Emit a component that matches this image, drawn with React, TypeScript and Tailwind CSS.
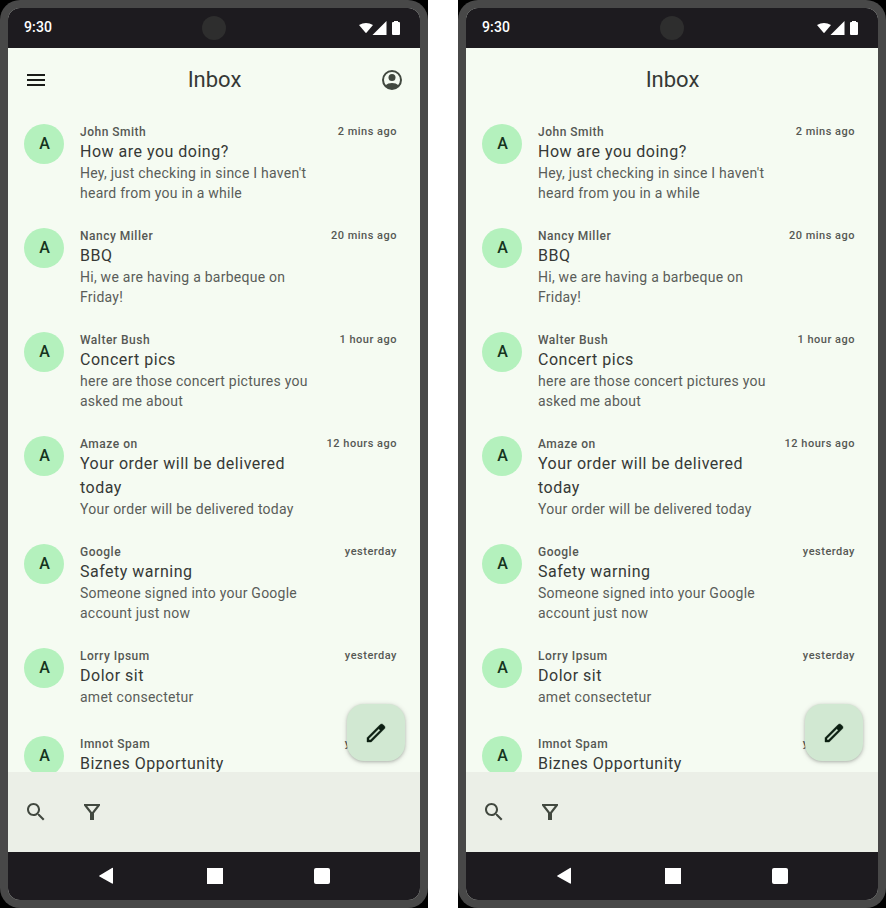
type Mail = { from: string; title: string; text?: string; time: string };

const mails: Mail[] = [
  { from: "John Smith", title: "How are you doing?", text: "Hey, just checking in since I haven't heard from you in a while", time: "2 mins ago" },
  { from: "Nancy Miller", title: "BBQ", text: "Hi, we are having a barbeque on Friday!", time: "20 mins ago" },
  { from: "Walter Bush", title: "Concert pics", text: "here are those concert pictures you asked me about", time: "1 hour ago" },
  { from: "Amaze on", title: "Your order will be delivered today", text: "Your order will be delivered today", time: "12 hours ago" },
  { from: "Google", title: "Safety warning", text: "Someone signed into your Google account just now", time: "yesterday" },
  { from: "Lorry Ipsum", title: "Dolor sit", text: "amet consectetur", time: "yesterday" },
  { from: "Imnot Spam", title: "Biznes Opportunity", time: "yesterday" },
];

function Icon({ d, className = "" }: { d: string; className?: string }) {
  return (
    <svg viewBox="0 0 24 24" className={`size-6 shrink-0 ${className}`} fill="currentColor">
      <path d={d} />
    </svg>
  );
}

const MENU = "M3 18h18v-2H3v2zm0-5h18v-2H3v2zm0-7v2h18V6H3z";
const SEARCH =
  "M15.5 14h-.79l-.28-.27C15.41 12.59 16 11.11 16 9.5 16 5.91 13.09 3 9.5 3S3 5.91 3 9.5 5.91 16 9.5 16c1.61 0 3.09-.59 4.23-1.57l.27.28v.79l5 4.99L20.49 19l-4.99-5zm-6 0C7.01 14 5 11.99 5 9.5S7.01 5 9.5 5 14 7.01 14 9.5 11.99 14 9.5 14z";
const FILTER = "M4 4h16v1.6L14 13.3V20h-4v-6.7L4 5.6V4zm3.2 2L12 12.2 16.8 6H7.2z";
const EDIT =
  "M5 19h1.425L16.2 9.225 14.775 7.8 5 17.575V19zm-2 2v-4.25L16.2 3.575c.2-.183.42-.325.663-.425a2.07 2.07 0 0 1 1.525 0c.25.1.466.25.65.45L20.425 5c.2.183.346.4.437.65a2.166 2.166 0 0 1 0 1.512 1.874 1.874 0 0 1-.437.663L7.25 21H3z";

function AccountIcon() {
  return (
    <svg viewBox="0 0 24 24" className="size-6 text-[#424940]" fill="currentColor">
      <circle cx="12" cy="12" r="9" fill="none" stroke="currentColor" strokeWidth="2" />
      <circle cx="12" cy="9.5" r="3.5" />
      <path d="M5.3 17.6C7 15.8 9.4 15 12 15s5 .8 6.7 2.6C17 20 14.7 21 12 21s-5-1-6.7-3.4z" />
    </svg>
  );
}

function StatusBar() {
  return (
    <div className="relative flex h-10 shrink-0 items-center justify-between bg-[#1d1b1f] pl-4 pr-5 text-white">
      <span className="relative -top-px text-[14px] font-medium leading-5 tracking-[0.14px]">9:30</span>
      <div className="absolute left-[194px] top-2 size-6 rounded-full bg-[#2e2e2e]" />
      <svg viewBox="0 0 42 16" className="h-4 w-[42px]" fill="currentColor">
        <path d="M1 5Q8 .8 15 5L8 13.3Z" />
        <path d="M28.5 1V15H14.5Z" />
        <path d="M36 2V1h4v1h1q1 0 1 1v11q0 1-1 1h-6q-1 0-1-1V3q0-1 1-1Z" />
      </svg>
    </div>
  );
}

function MailRow({ mail }: { mail: Mail }) {
  return (
    <li className="flex min-h-[88px] shrink-0 gap-4 py-3 pl-4 pr-[23px]">
      <div className="flex size-10 shrink-0 items-center justify-center rounded-full bg-[#b4f1bd] pl-px text-[16px] font-medium leading-6 text-[#163420]">
        A
      </div>
      <div className="min-w-0 flex-1">
        <div className="text-[12px] font-medium leading-4 tracking-[0.5px] text-[#555854]">{mail.from}</div>
        <div className="text-[16px] leading-6 tracking-[0.5px] text-[#363936]">{mail.title}</div>
        {mail.text && (
          <div className="-mt-px mb-px text-[14px] leading-5 tracking-[0.25px] text-[#5a5d59]">{mail.text}</div>
        )}
      </div>
      <div className="shrink-0 text-[11px] font-medium leading-4 tracking-[0.5px] text-[#555854]">{mail.time}</div>
    </li>
  );
}

function Phone({ actions }: { actions: boolean }) {
  return (
    <div className="h-[908px] w-[428px] bg-black">
      <div className="h-full rounded-[20px] bg-[#484848] p-2">
        <div className="flex h-full flex-col overflow-hidden rounded-xl bg-[#f5fbf2]">
          <StatusBar />
          <header className="grid h-16 shrink-0 grid-cols-[24px_1fr_24px] items-center px-4 text-[#1a1c19]">
            <div>{actions && <Icon d={MENU} />}</div>
            <h1 className="pl-px text-center text-[22px] leading-7 text-[#363936]">Inbox</h1>
            <div>{actions && <AccountIcon />}</div>
          </header>
          <main className="relative min-h-0 flex-1 overflow-hidden">
            <ul className="flex flex-col">
              {mails.map((mail) => (
                <MailRow key={mail.from} mail={mail} />
              ))}
            </ul>
            <button className="absolute bottom-[11px] right-[15px] flex h-[57px] w-[58px] items-center justify-center rounded-[17px] bg-[#d1e8d2] pt-px text-[#0c1f12] shadow-[0_1px_3px_rgba(0,0,0,0.2),0_1px_5px_1px_rgba(0,0,0,0.1)]">
              <Icon d={EDIT} className="stroke-current stroke-[0.4]" />
            </button>
          </main>
          <div className="flex h-20 shrink-0 items-center gap-8 bg-[#ebefe7] px-4 text-[#424940]">
            <Icon d={SEARCH} />
            <Icon d={FILTER} />
          </div>
          <nav className="flex h-12 shrink-0 items-center bg-[#1d1b1f] pl-[90px] text-white">
            <svg viewBox="0 0 16 18" className="h-[18px] w-4" fill="currentColor">
              <path d="M14 1Q15 .5 15 1.5V16Q15 17 14 16.5L1.5 9.5Q.5 9 1.5 8.5Z" />
            </svg>
            <div className="ml-[93px] size-4 bg-white" />
            <div className="ml-[91px] size-4 rounded-[2px] bg-white" />
          </nav>
        </div>
      </div>
    </div>
  );
}

export default function App() {
  return (
    <div className="flex h-[908px] w-[886px] gap-[30px] overflow-hidden bg-white font-['Roboto',sans-serif]">
      <Phone actions />
      <Phone actions={false} />
    </div>
  );
}
